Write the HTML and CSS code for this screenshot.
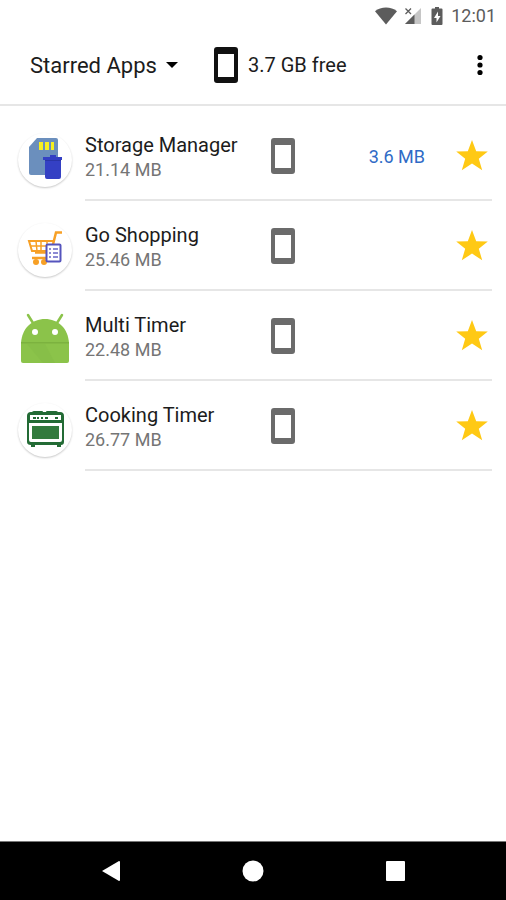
FILE: index.html
```html
<!DOCTYPE html>
<html lang="en">
<head>
  <meta charset="UTF-8">
  <meta name="viewport" content="width=device-width, initial-scale=1.0">
  <title>Starred Apps</title>
  <link rel="stylesheet" href="styles.css">
</head>
<body>
  <!-- Shared icons -->
  <svg class="sprite" aria-hidden="true">
    <symbol id="phone" viewBox="0 0 24 36">
      <path fill="currentColor" fill-rule="evenodd" d="M3 0h18a3 3 0 0 1 3 3v30a3 3 0 0 1-3 3H3a3 3 0 0 1-3-3V3a3 3 0 0 1 3-3zM4 7v23h16V7z"/>
    </symbol>
    <symbol id="star" viewBox="0 0 32 32">
      <path fill="currentColor" d="M16 0l4.200 11.200 11.600.2-9 7.300 3.400 11.500L16 23.600l-10.200 6.600 3.400-11.500L.2 11.400l11.600-.2z"/>
    </symbol>
  </svg>

  <div class="status-bar">
    <svg class="wifi" viewBox="0 0 22 18" aria-label="Wi-Fi">
      <path fill="#5c5c5c" d="M11 17.500L0 4.200C3 1.600 6.900 .4 11 .4s8 1.200 11 3.800z"/>
    </svg>
    <svg class="signal" viewBox="0 0 18 18" aria-label="No signal">
      <path fill="#c6c6c6" d="M17 1v16H1z"/>
      <path fill="#5c5c5c" d="M10.500 7.500V17H1z"/>
      <path stroke="#5c5c5c" stroke-width="1.300" d="M1.500 1.500l5.500 5.500M7 1.500L1.500 7"/>
    </svg>
    <svg class="battery" viewBox="0 0 12 18" aria-label="Charging">
      <path fill="#5c5c5c" d="M4 0h4v1.500h2.500q1 0 1 1v14.500q0 1-1 1h-9q-1 0-1-1V2.500q0-1 1-1H4z"/>
      <path fill="#fff" d="M7 4.500L3 11h2.500v4.500L9.500 9H7z"/>
    </svg>
    <time class="clock">12:01</time>
  </div>

  <header class="header">
    <div class="filter">
      <select class="filter-select" aria-label="App list">
        <option>Starred Apps</option>
      </select>
      <svg class="caret" viewBox="0 0 12 6" aria-hidden="true"><path d="M0 0h12L6 6z"/></svg>
    </div>
    <div class="free-space">
      <svg class="phone"><use href="#phone"/></svg>
      <span>3.7 GB free</span>
    </div>
    <button class="more" type="button" aria-label="More options">
      <svg viewBox="0 0 6 22"><circle cx="3" cy="3.500" r="2.600"/><circle cx="3" cy="11" r="2.600"/><circle cx="3" cy="18.500" r="2.600"/></svg>
    </button>
  </header>

  <main>
    <ul class="app-list">
      <li class="app">
        <svg class="app-icon round" viewBox="0 0 54 54" aria-hidden="true">
          <path fill="#6b8fbd" d="M19 5h19q2 0 2 2v33q0 2-2 2H13q-2 0-2-2V14z"/>
          <path fill="#f7f01e" d="M21 9h4v8h-4zM27 9h4v8h-4zM33 9h3v8h-3z"/>
          <path fill="#3440c4" d="M32 22h6v2h6v3h-1v17q0 2-2 2H29q-2 0-2-2V27h-2v-3h7z"/>
          <path fill="none" stroke="#2a35a6" d="M27 27.500h16"/>
        </svg>
        <div class="app-body">
          <div class="app-text">
            <h2 class="app-name">Storage Manager</h2>
            <p class="app-size">21.14 MB</p>
          </div>
          <svg class="phone"><use href="#phone"/></svg>
          <span class="cache">3.6 MB</span>
          <button class="star" type="button" aria-label="Unstar Storage Manager"><svg><use href="#star"/></svg></button>
        </div>
      </li>
      <li class="app">
        <svg class="app-icon round" viewBox="0 0 54 54" aria-hidden="true">
          <g fill="none" stroke="#f7a026" stroke-width="2">
            <path d="M44 9.500h-6l-5 20H17" stroke-width="2.500"/>
            <path d="M35 18H11l3 10h19"/>
            <path d="M12 23h22M18 18l1 10M23 18v10M29 18v10" stroke-width="1.500"/>
            <path d="M33 30l-2 5H14" stroke-width="2.500"/>
          </g>
          <circle cx="18" cy="39" r="3" fill="#f7a026"/>
          <circle cx="26" cy="39" r="3" fill="#f7a026"/>
          <rect x="28.500" y="21.500" width="14" height="17" rx="1" fill="#fff" stroke="#5554bd" stroke-width="2"/>
          <path stroke="#6766c5" stroke-width="1.500" d="M31 26h2M31 30h2M31 34h2M35 26h5M35 30h5M35 34h5"/>
        </svg>
        <div class="app-body">
          <div class="app-text">
            <h2 class="app-name">Go Shopping</h2>
            <p class="app-size">25.46 MB</p>
          </div>
          <svg class="phone"><use href="#phone"/></svg>
          <span class="cache"></span>
          <button class="star" type="button" aria-label="Unstar Go Shopping"><svg><use href="#star"/></svg></button>
        </div>
      </li>
      <li class="app">
        <svg class="app-icon" viewBox="0 0 54 54" aria-hidden="true">
          <path stroke="#8bc34a" stroke-width="2.500" stroke-linecap="round" d="M10 2l5 8M44 2l-5 8"/>
          <path fill="#8bc34a" d="M3 30C4 15 14 6 27 6s23 9 24 24v18q0 2-2 2H5q-2 0-2-2z"/>
          <path fill="#7cb23f" d="M3 29h48v1.500H3z"/>
          <path fill="#83bb45" d="M9 31h18l10 19H25z" opacity=".5"/>
          <circle cx="17" cy="19" r="3" fill="#fff"/>
          <circle cx="37" cy="19" r="3" fill="#fff"/>
        </svg>
        <div class="app-body">
          <div class="app-text">
            <h2 class="app-name">Multi Timer</h2>
            <p class="app-size">22.48 MB</p>
          </div>
          <svg class="phone"><use href="#phone"/></svg>
          <span class="cache"></span>
          <button class="star" type="button" aria-label="Unstar Multi Timer"><svg><use href="#star"/></svg></button>
        </div>
      </li>
      <li class="app">
        <svg class="app-icon round" viewBox="0 0 54 54" aria-hidden="true">
          <path fill="#236b35" d="M16 8h8q1 0 1 1h3q0-1 1-1h9q1 0 2 1h2q4 0 4 4v26q0 3-3 3v2h-4v-2H17v2h-4v-2q-4 0-4-3V13q0-4 4-4h1q1-1 2-1z"/>
          <path fill="#fff" d="M12 12h31v5H12zM11 20h33v17q0 2-2 2H13q-2 0-2-2z"/>
          <path fill="#327a3d" d="M14 23h27v13H14z"/>
          <path stroke="#236b35" stroke-width="2" d="M15 15h3M19 15h2M23 15h2M27 15h3M37 15h3"/>
        </svg>
        <div class="app-body">
          <div class="app-text">
            <h2 class="app-name">Cooking Timer</h2>
            <p class="app-size">26.77 MB</p>
          </div>
          <svg class="phone"><use href="#phone"/></svg>
          <span class="cache"></span>
          <button class="star" type="button" aria-label="Unstar Cooking Timer"><svg><use href="#star"/></svg></button>
        </div>
      </li>
    </ul>
  </main>

  <nav class="nav-bar">
    <button type="button" aria-label="Back"><svg viewBox="0 0 22 22"><path d="M2 11L19 1q1 0 1 1v18q0 1-1 1z"/></svg></button>
    <button type="button" aria-label="Home"><svg viewBox="0 0 22 22"><circle cx="11" cy="11" r="10.500"/></svg></button>
    <button type="button" aria-label="Recent apps"><svg viewBox="0 0 22 22"><rect x="2" y="1" width="19" height="20" rx="1"/></svg></button>
  </nav>
</body>
</html>
```
FILE: styles.css
```css
* {
  box-sizing: border-box;
}

body {
  display: flex;
  flex-direction: column;
  min-height: 100vh;
  margin: 0;
  font-family: Roboto, sans-serif;
  color: #1c1c1c;
  background: #fff;
}

svg {
  display: block;
}

button {
  padding: 0;
  border: none;
  background: none;
  cursor: pointer;
}

.sprite {
  position: absolute;
  width: 0;
  height: 0;
}

.status-bar {
  display: flex;
  justify-content: flex-end;
  align-items: center;
  height: 26px;
  padding: 5px 10px 0 0;
}

.wifi {
  width: 22px;
  height: 18px;
  margin-right: 7px;
}

.signal {
  width: 18px;
  height: 18px;
  margin-right: 9px;
}

.battery {
  width: 12px;
  height: 18px;
  margin-right: 8px;
}

.clock {
  font-size: 18px;
  line-height: 20px;
  color: #5c5c5c;
}

.header {
  display: flex;
  align-items: center;
  height: 80px;
  padding: 0 14px 0 30px;
  border-bottom: 2px solid #e6e6e6;
}

.filter {
  display: flex;
  align-items: center;
  position: relative;
  margin-right: 36px;
}

.filter-select {
  appearance: none;
  padding: 2px 21px 0 0;
  border: none;
  background: none;
  font-family: inherit;
  font-size: 22px;
  line-height: 28px;
  color: inherit;
}

.caret {
  position: absolute;
  right: 0;
  width: 12px;
  height: 6px;
  pointer-events: none;
}

.phone {
  width: 24px;
  height: 36px;
}

.header .phone {
  color: #111;
}

.free-space {
  display: flex;
  align-items: center;
  gap: 10px;
  font-size: 20px;
  line-height: 28px;
}

.more {
  display: flex;
  justify-content: center;
  width: 24px;
  margin-left: auto;
}

.more svg {
  width: 6px;
  height: 22px;
}

main {
  flex: 1;
}

.app-list {
  margin: 0;
  padding: 5px 14px 0 18px;
  list-style: none;
}

.app {
  display: flex;
  gap: 13px;
  height: 90px;
}

.app-icon {
  width: 54px;
  height: 54px;
  margin-top: 22px;
}

.round {
  border-radius: 50%;
  box-shadow: 0 1px 2px rgba(0, 0, 0, 0.22);
}

.app-body {
  display: flex;
  flex: 1;
  align-items: center;
  padding-top: 2px;
  border-bottom: 2px solid #e6e6e6;
}

.app-text {
  width: 186px;
  padding-top: 2px;
}

.app-name {
  margin: 0;
  font-size: 20px;
  font-weight: 400;
  line-height: 26px;
}

.app-size {
  margin: 0;
  font-size: 18px;
  line-height: 24px;
  color: #757575;
}

.app .phone {
  color: #6b6b6b;
}

.cache {
  margin-left: auto;
  font-size: 18px;
  color: #2f6bc6;
}

.star {
  margin: 0 4px 0 31px;
  color: #ffc914;
}

.star svg {
  width: 32px;
  height: 32px;
}

.nav-bar {
  display: flex;
  justify-content: center;
  height: 59px;
  border-top: 1px solid #777;
  background: #000;
}

.nav-bar button {
  display: flex;
  justify-content: center;
  align-items: center;
  width: 142px;
}

.nav-bar svg {
  width: 22px;
  height: 22px;
  fill: #fff;
}
```
